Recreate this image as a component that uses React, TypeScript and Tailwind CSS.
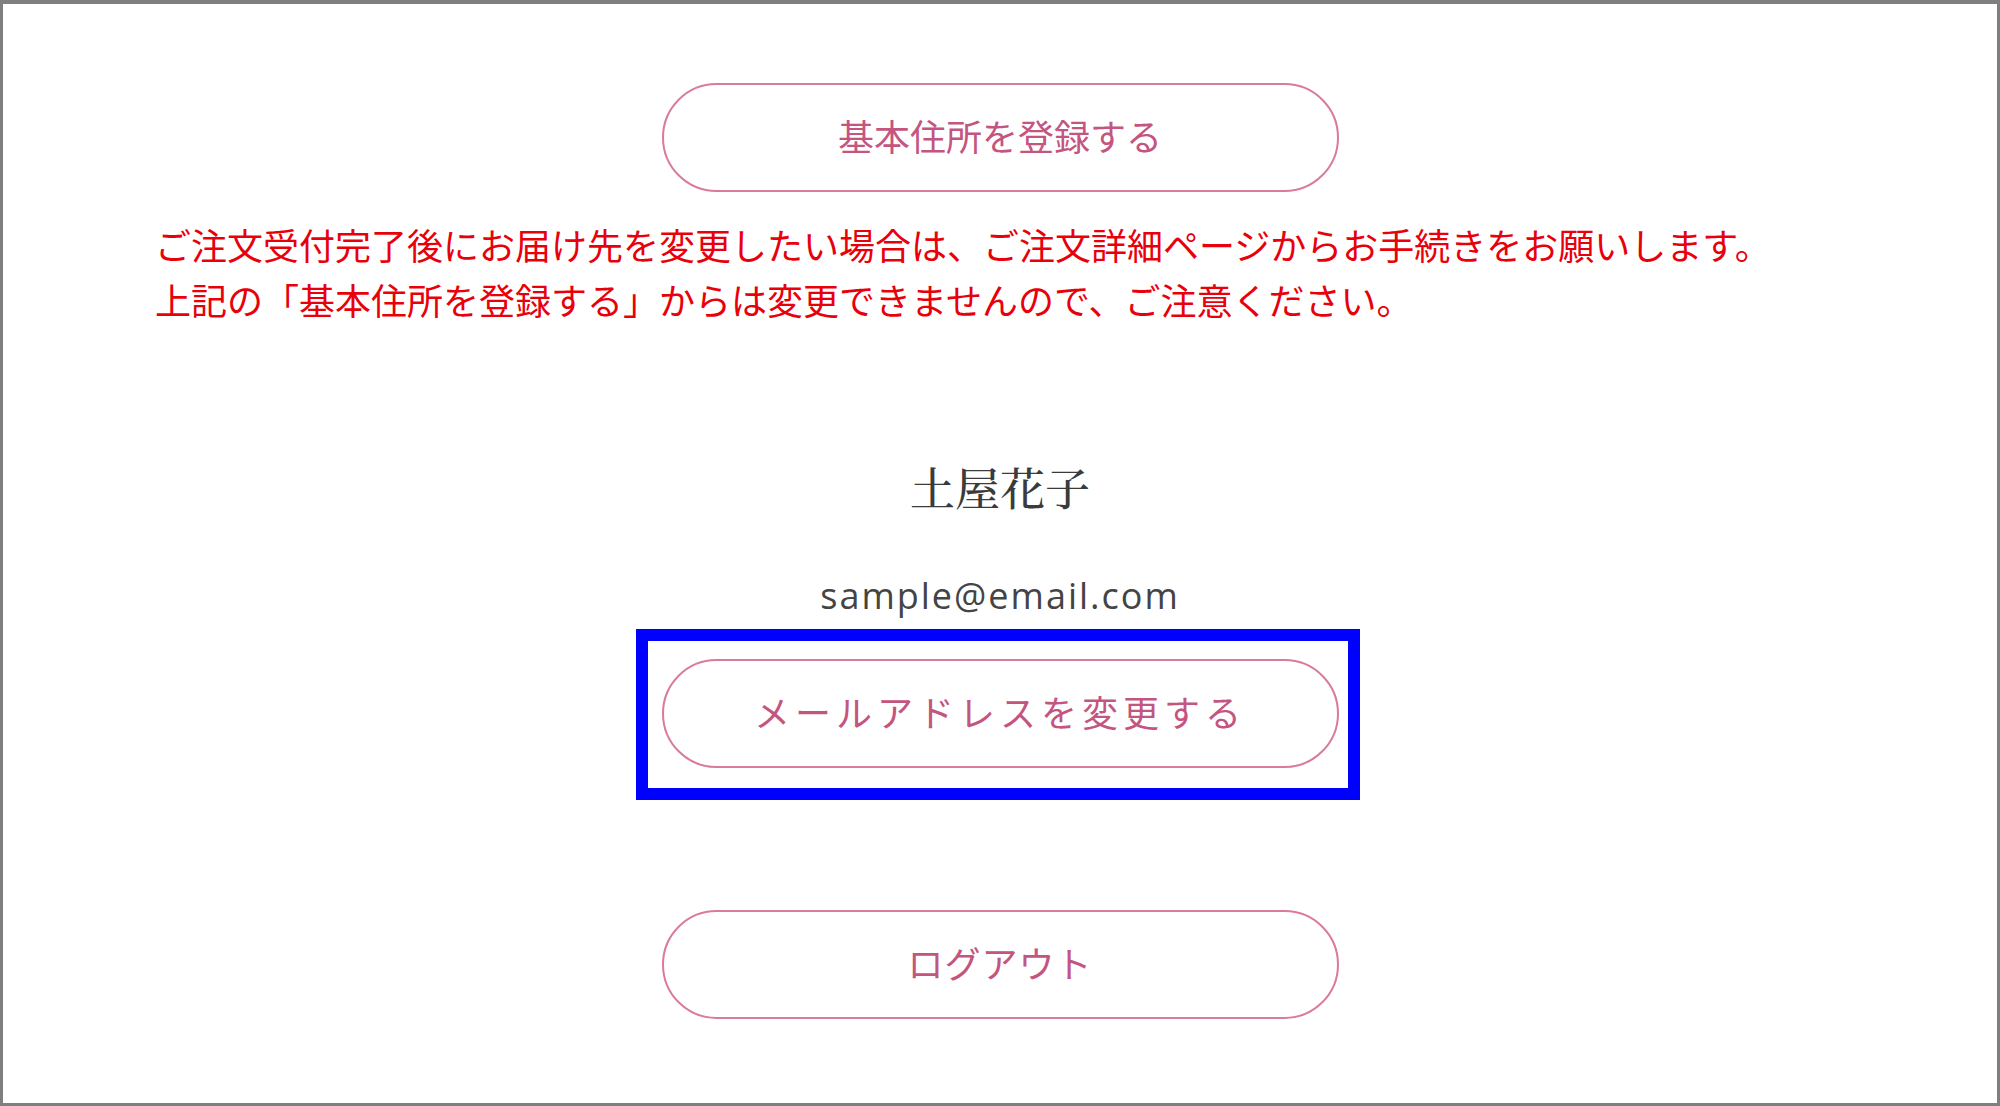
const jp = 'font-["Noto_Sans_CJK_JP",sans-serif]';

const PillButton = ({ label, tracking = '' }: { label: string; tracking?: string }) => (
  <button
    className={`w-[677px] h-[109px] rounded-full border-2 border-[#da7a9c] bg-white pb-[5px] text-[36px] text-[#c4557f] ${jp} ${tracking}`}
  >
    {label}
  </button>
);

export default function App() {
  return (
    <div className="h-[1106px] w-full overflow-hidden border-[3px] border-t-4 border-[#7f7f7f] bg-white">
      <div className="flex flex-col items-center pt-[79px]">
        {/* Address */}
        <PillButton label="基本住所を登録する" />

        <div className={`mt-[25px] w-full px-[152px] text-[36px] leading-[55px] text-[#e8000b] ${jp}`}>
          <p>ご注文受付完了後にお届け先を変更したい場合は、ご注文詳細ページからお手続きをお願いします。</p>
          <p>上記の「基本住所を登録する」からは変更できませんので、ご注意ください。</p>
        </div>

        {/* Account */}
        <h2
          className={`mt-[128px] text-[45px] font-medium leading-[64px] text-[#3b3b3b] font-["Noto_Serif_CJK_JP","Noto_Sans_CJK_JP",serif]`}
        >
          土屋花子
        </h2>
        <p className='mt-[55px] text-[36px] leading-[44px] tracking-[2px] text-[#444444] font-["Open_Sans",sans-serif]'>
          sample@email.com
        </p>

        <div className="relative mt-[41px]">
          <PillButton label="メールアドレスを変更する" tracking="tracking-[5px]" />
          <div className="pointer-events-none absolute -top-[30px] -bottom-[32px] -left-[26px] -right-[21px] border-[12px] border-[#0000ff]" />
        </div>

        <div className="mt-[142px]">
          <PillButton label="ログアウト" tracking="tracking-[1px]" />
        </div>
      </div>
    </div>
  );
}
